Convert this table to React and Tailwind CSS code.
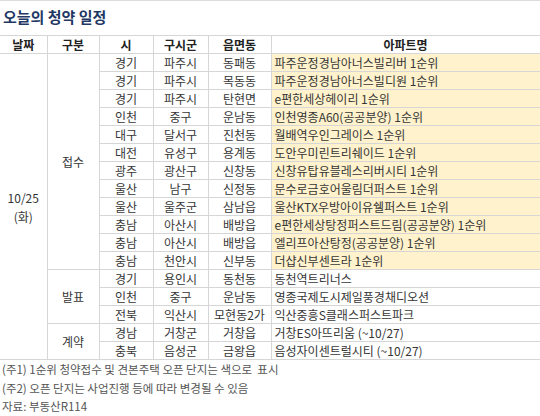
import React from "react";

const rows = [
  ["경기", "파주시", "동패동", "파주운정경남아너스빌리버 1순위"],
  ["경기", "파주시", "목동동", "파주운정경남아너스빌디원 1순위"],
  ["경기", "파주시", "탄현면", "e편한세상헤이리 1순위"],
  ["인천", "중구", "운남동", "인천영종A60(공공분양) 1순위"],
  ["대구", "달서구", "진천동", "월배역우인그레이스 1순위"],
  ["대전", "유성구", "용계동", "도안우미린트리쉐이드 1순위"],
  ["광주", "광산구", "신창동", "신창유탑유블레스리버시티 1순위"],
  ["울산", "남구", "신정동", "문수로금호어울림더퍼스트 1순위"],
  ["울산", "울주군", "삼남읍", "울산KTX우방아이유쉘퍼스트 1순위"],
  ["충남", "아산시", "배방읍", "e편한세상탕정퍼스트드림(공공분양) 1순위"],
  ["충남", "아산시", "배방읍", "엘리프아산탕정(공공분양) 1순위"],
  ["충남", "천안시", "신부동", "더샵신부센트라 1순위"],
  ["경기", "용인시", "동천동", "동천역트리너스"],
  ["인천", "중구", "운남동", "영종국제도시제일풍경채디오션"],
  ["전북", "익산시", "모현동2가", "익산중흥S클래스퍼스트파크"],
  ["경남", "거창군", "거창읍", "거창ES아뜨리움 (~10/27)"],
  ["충북", "음성군", "금왕읍", "음성자이센트럴시티 (~10/27)"],
];

const groups = { 0: ["접수", 12], 12: ["발표", 3], 15: ["계약", 2] };

const cell = "border border-[#d6d6d6] h-[18px] p-0 leading-[17px] text-center whitespace-nowrap";

export default function App() {
  return (
    <div
      className="w-[540px] h-[416px] bg-white text-[#363636] overflow-hidden"
      style={{ fontFamily: '"Noto Sans CJK KR", "Noto Sans", sans-serif' }}
    >
      <div className="h-[35px] border-t border-[#dcdcdc] flex items-center pl-[3px] pb-[3px]">
        <span className="text-[15px] font-bold text-[#1f3864] leading-none">오늘의 청약 일정</span>
      </div>
      <table className="table-fixed border-collapse w-[540px] text-[12px] border-l-0">
        <colgroup>
          <col className="w-[47px]" />
          <col className="w-[52px]" />
          <col className="w-[54px]" />
          <col className="w-[55px]" />
          <col className="w-[63px]" />
          <col className="w-[269px]" />
        </colgroup>
        <thead>
          <tr className="font-bold text-[#222]">
            <th className={cell + " border-l-0"}>날짜</th>
            <th className={cell}>구분</th>
            <th className={cell}>시</th>
            <th className={cell}>구시군</th>
            <th className={cell}>읍면동</th>
            <th className={cell}>아파트명</th>
          </tr>
        </thead>
        <tbody>
          {rows.map((r, i) => (
            <tr key={i}>
              {i === 0 && (
                <td rowSpan={17} className={cell + " border-l-0 leading-[19px]"}>
                  10/25
                  <br />
                  (화)
                </td>
              )}
              {groups[i] && (
                <td rowSpan={groups[i][1]} className={cell}>
                  {groups[i][0]}
                </td>
              )}
              <td className={cell}>{r[0]}</td>
              <td className={cell}>{r[1]}</td>
              <td className={cell}>{r[2]}</td>
              <td
                className={
                  cell +
                  " text-left pl-[3px] " +
                  (i < 12 ? "bg-[#fff2cc]" : "bg-white")
                }
              >
                {r[3]}
              </td>
            </tr>
          ))}
        </tbody>
      </table>
      <div className="text-[11.5px] text-[#555] leading-[18.5px] pl-[2px]">
        <div>(주1) 1순위 청약접수 및 견본주택 오픈 단지는 색으로&nbsp; 표시</div>
        <div>(주2) 오픈 단지는 사업진행 등에 따라 변경될 수 있음</div>
        <div>자료: 부동산R114</div>
      </div>
    </div>
  );
}
